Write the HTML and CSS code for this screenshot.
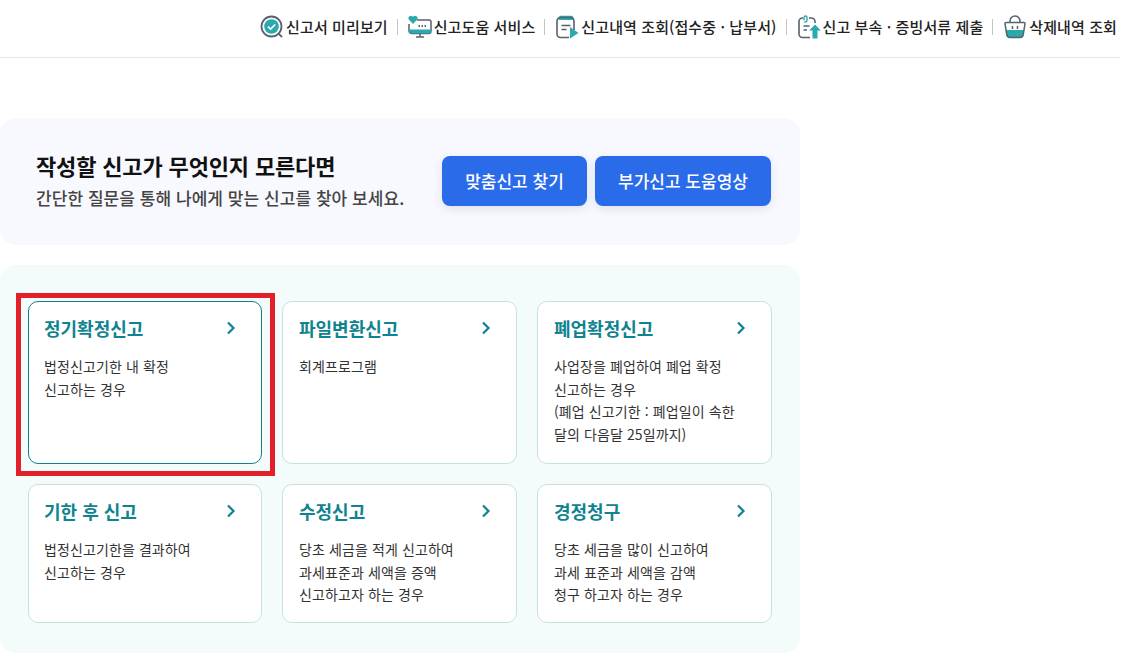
FILE: index.html
```html
<!DOCTYPE html>
<html lang="ko">
<head>
    <meta charset="UTF-8">
    <meta name="viewport" content="width=device-width, initial-scale=1.0">
    <title>부가가치세 신고</title>
    <link rel="stylesheet" href="styles.css">
</head>
<body>
    <!-- Top menu -->
    <header class="topbar">
        <a href="#" class="top-link">
            <svg class="top-icon" viewBox="0 0 24 24"><circle cx="11.5" cy="11.5" r="10" fill="none" stroke="#56626e" stroke-width="1.800"/><circle cx="11.5" cy="11.5" r="7.300" fill="#2aa9ae"/><path d="M8 11.600l2.600 2.500 4.600-4.600" fill="none" stroke="#fff" stroke-width="1.700"/><path d="M18.800 18.800l3.200 3.200" stroke="#56626e" stroke-width="1.800"/></svg>
            신고서 미리보기
        </a>
        <span class="top-sep"></span>
        <a href="#" class="top-link">
            <svg class="top-icon" viewBox="0 0 24 24"><path d="M9 5H21a2 2 0 0 1 2 2V16a2.500 2.500 0 0 1-2.500 2.500H3.500A2.500 2.500 0 0 1 1 16V9" fill="none" stroke="#56626e" stroke-width="1.500"/><path d="M1 14.500h22V16a2.500 2.500 0 0 1-2.500 2.500H3.500A2.500 2.500 0 0 1 1 16z" fill="#2aa9ae"/><path d="M12 18.500v3M8 22h8" stroke="#56626e" stroke-width="1.500"/><path d="M5 9L.8 4.500A2.400 2.400 0 0 1 5 2a2.400 2.400 0 0 1 4.200 2.500z" fill="#2aa9ae"/><path d="M10.500 11h1.500M13.500 11h1.500M16.500 11h1.500" stroke="#333" stroke-width="1.500"/></svg>
            신고도움 서비스
        </a>
        <span class="top-sep"></span>
        <a href="#" class="top-link">
            <svg class="top-icon" viewBox="0 0 24 24"><path d="M6 .8h10a2.500 2.500 0 0 1 2.500 2.500V5H3.500V3.300A2.500 2.500 0 0 1 6 .8z" fill="#2aa9ae"/><path d="M19 15V6a3.500 3.500 0 0 0-3.500-3.500h-10A3.500 3.500 0 0 0 2 6v13a3.500 3.500 0 0 0 3.500 3.500H14" fill="none" stroke="#56626e" stroke-width="1.600"/><path d="M6.500 10.500h9M6.500 14.500h5" stroke="#56626e" stroke-width="1.600"/><path d="M15 12l8.500 6-8.500 5.500z" fill="#2aa9ae"/></svg>
            신고내역 조회(접수중 · 납부서)
        </a>
        <span class="top-sep"></span>
        <a href="#" class="top-link">
            <svg class="top-icon" viewBox="0 0 24 24"><path d="M18 8V6.500A3.500 3.500 0 0 0 14.500 3H12M6 3H5.500A3.500 3.500 0 0 0 2 6.500V19a3.500 3.500 0 0 0 3.500 3.500H13" fill="none" stroke="#56626e" stroke-width="1.600"/><path d="M7 5.500V2.500a1.500 1.500 0 0 1 3 0V5a2 2 0 0 1-2.500 2" fill="none" stroke="#2aa9ae" stroke-width="1.400"/><path d="M6.500 11h6M6.500 15h3.500" stroke="#56626e" stroke-width="1.600"/><path d="M18 9.500l5.800 6H20.500V23.500h-5v-8h-3.300z" fill="#2aa9ae"/></svg>
            신고 부속 · 증빙서류 제출
        </a>
        <span class="top-sep"></span>
        <a href="#" class="top-link">
            <svg class="top-icon" viewBox="0 0 24 24"><path d="M3.200 15h17.600l-.6 4.800a3 3 0 0 1-3 2.700H6.800a3 3 0 0 1-3-2.700z" fill="#2aa9ae"/><path d="M3 7.500h18a1 1 0 0 1 1 1.100L20.200 19.800a3 3 0 0 1-3 2.700H6.800a3 3 0 0 1-3-2.700L2 8.600A1 1 0 0 1 3 7.500z" fill="none" stroke="#56626e" stroke-width="1.500"/><path d="M7 7.500V6a5 5 0 0 1 10 0v1.500" fill="none" stroke="#56626e" stroke-width="1.500"/><path d="M9.500 11v3M14.500 11v3" stroke="#56626e" stroke-width="1.500"/></svg>
            삭제내역 조회
        </a>
    </header>

    <main class="content">
        <!-- Guide box -->
        <section class="guide">
            <div class="guide-text">
                <h2 class="guide-title">작성할 신고가 무엇인지 모른다면</h2>
                <p class="guide-desc">간단한 질문을 통해 나에게 맞는 신고를 찾아 보세요.</p>
            </div>
            <div class="guide-btns">
                <a href="#" class="btn btn-find">맞춤신고 찾기</a>
                <a href="#" class="btn btn-video">부가신고 도움영상</a>
            </div>
        </section>

        <!-- Report types -->
        <section class="types">
            <a href="#" class="card card-active">
                <div class="card-head">
                    <span class="card-title">정기확정신고</span>
                    <svg class="card-arrow" viewBox="0 0 10 14"><path d="M2 1.500L7.500 7 2 12.500" /></svg>
                </div>
                <p class="card-desc">법정신고기한 내 확정<br>신고하는 경우</p>
            </a>
            <a href="#" class="card">
                <div class="card-head">
                    <span class="card-title">파일변환신고</span>
                    <svg class="card-arrow" viewBox="0 0 10 14"><path d="M2 1.500L7.500 7 2 12.500" /></svg>
                </div>
                <p class="card-desc">회계프로그램</p>
            </a>
            <a href="#" class="card">
                <div class="card-head">
                    <span class="card-title">폐업확정신고</span>
                    <svg class="card-arrow" viewBox="0 0 10 14"><path d="M2 1.500L7.500 7 2 12.500" /></svg>
                </div>
                <p class="card-desc">사업장을 폐업하여 폐업 확정<br>신고하는 경우<br>(폐업 신고기한 : 폐업일이 속한<br>달의 다음달 25일까지)</p>
            </a>
            <a href="#" class="card">
                <div class="card-head">
                    <span class="card-title">기한 후 신고</span>
                    <svg class="card-arrow" viewBox="0 0 10 14"><path d="M2 1.500L7.500 7 2 12.500" /></svg>
                </div>
                <p class="card-desc">법정신고기한을 결과하여<br>신고하는 경우</p>
            </a>
            <a href="#" class="card">
                <div class="card-head">
                    <span class="card-title">수정신고</span>
                    <svg class="card-arrow" viewBox="0 0 10 14"><path d="M2 1.500L7.500 7 2 12.500" /></svg>
                </div>
                <p class="card-desc">당초 세금을 적게 신고하여<br>과세표준과 세액을 증액<br>신고하고자 하는 경우</p>
            </a>
            <a href="#" class="card">
                <div class="card-head">
                    <span class="card-title">경정청구</span>
                    <svg class="card-arrow" viewBox="0 0 10 14"><path d="M2 1.500L7.500 7 2 12.500" /></svg>
                </div>
                <p class="card-desc">당초 세금을 많이 신고하여<br>과세 표준과 세액을 감액<br>청구 하고자 하는 경우</p>
            </a>
        </section>
    </main>
</body>
</html>
```

FILE: styles.css
```css
* {
    margin: 0;
    padding: 0;
    box-sizing: border-box;
    font-family: "Noto Sans CJK KR", "Noto Sans", sans-serif;
}

html, body {
    height: 666px;
    overflow: hidden;
}

body {
    background-color: #fff;
    color: #222;
    width: 1120px;
}

a {
    text-decoration: none;
    color: inherit;
}

/* Top menu */
.topbar {
    display: flex;
    justify-content: flex-end;
    align-items: center;
    height: 58px;
    padding: 0 3px 4px 0;
    border-bottom: 1px solid #e6e6e6;
}

.top-link {
    display: flex;
    align-items: center;
    gap: 2px;
    font-size: 15px;
    font-weight: 500;
    letter-spacing: 0.1px;
    color: #222;
    white-space: nowrap;
}

.top-icon {
    width: 24px;
    height: 24px;
}

.top-sep {
    width: 1px;
    height: 16px;
    margin: 0 10px 0 9px;
    background-color: #c4c4c4;
}

.content {
    width: 800px;
    padding-top: 60px;
}

/* Guide box */
.guide {
    display: flex;
    justify-content: space-between;
    align-items: center;
    height: 127px;
    padding: 0 29px 2px 36px;
    background-color: #f8f9fe;
    border-radius: 16px;
}

.guide-title {
    font-size: 22px;
    font-weight: 700;
    letter-spacing: -0.15px;
    color: #111;
    line-height: 30px;
    margin-bottom: 5px;
}

.guide-desc {
    font-size: 17px;
    font-weight: 500;
    letter-spacing: 0.05px;
    color: #444;
    line-height: 26px;
}

.guide-btns {
    display: flex;
    gap: 8px;
}

.btn {
    display: flex;
    align-items: center;
    justify-content: center;
    height: 50px;
    font-size: 17px;
    font-weight: 500;
    color: #fff;
    background-color: #2a6bea;
    border-radius: 8px;
    box-shadow: 0 3px 10px rgba(40, 60, 120, 0.12);
}

.btn-find {
    width: 145px;
}

.btn-video {
    width: 176px;
}

/* Report types */
.types {
    display: grid;
    grid-template-columns: 234px 235px 235px;
    grid-template-rows: 163px 139px;
    column-gap: 20px;
    row-gap: 20px;
    margin-top: 20px;
    padding: 36px 28px 30px;
    background-color: #f3fcfa;
    border-radius: 16px;
}

.card {
    position: relative;
    display: block;
    padding: 13px 15px;
    background-color: #fff;
    border: 1px solid #c9e0e2;
    border-radius: 10px;
}

.card:not(:nth-child(3n+1)) {
    padding-left: 16px;
}

.card-active {
    border-color: #12808c;
}

/* red mark drawn over the selected card */
.card-active::after {
    content: "";
    position: absolute;
    top: -9px;
    left: -13px;
    right: -14px;
    bottom: -13px;
    border: 5px solid #e3202a;
}

.card-head {
    display: flex;
    justify-content: space-between;
    align-items: center;
    padding-right: 10px;
    margin-bottom: 14px;
}

.card-title {
    font-size: 18px;
    font-weight: 700;
    color: #0f8390;
    line-height: 26px;
}

.card-arrow {
    width: 10px;
    height: 14px;
    fill: none;
    stroke: #0f8390;
    stroke-width: 2.2;
}

.card-desc {
    font-size: 14px;
    letter-spacing: 0.1px;
    color: #333;
    line-height: 22.67px;
}
```
